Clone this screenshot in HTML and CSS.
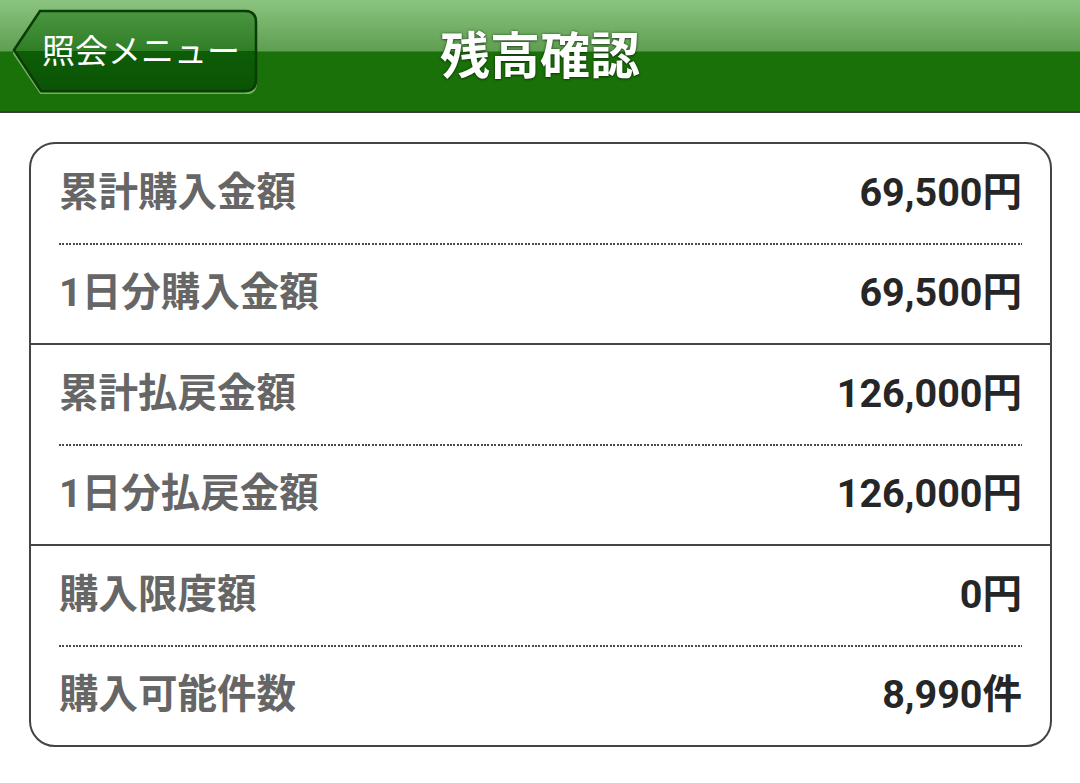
FILE: index.html
```html
<!DOCTYPE html>
<html lang="ja">
<head>
<meta charset="utf-8">
<title>残高確認</title>
<link rel="stylesheet" href="styles.css">
</head>
<body>
<header class="topbar">
  <div class="topbar-left">
    <a class="back-btn" href="#">
      <svg class="back-bg" width="248" height="86" viewBox="0 0 248 86" aria-hidden="true">
        <defs>
          <linearGradient id="bfill" x1="0" y1="0" x2="0" y2="1">
            <stop offset="0" stop-color="#4b9641"/>
            <stop offset="0.5" stop-color="#2f7e26"/>
            <stop offset="0.5" stop-color="#0d5d07"/>
            <stop offset="1" stop-color="#0a5405"/>
          </linearGradient>
        </defs>
        <path d="M3 44 L29 4 L234 4 Q245 4 245 15 L245 73 Q245 84 234 84 L30 84 Z" fill="none" stroke="#74b164" stroke-width="2" transform="translate(0,1.5)"/>
        <path d="M3 42 L29 3 L234 3 Q245 3 245 14 L245 72 Q245 83 234 83 L30 83 Z" fill="url(#bfill)" stroke="#0a3d05" stroke-width="2.5"/>
      </svg>
      <span class="back-label">照会メニュー</span>
    </a>
  </div>
  <h1 class="title">残高確認</h1>
  <div class="topbar-right"></div>
</header>

<main class="content">
  <div class="card">
    <section class="group">
      <div class="row"><span class="label">累計購入金額</span><span class="value">69,500円</span></div>
      <div class="dots"></div>
      <div class="row"><span class="label">1日分購入金額</span><span class="value">69,500円</span></div>
    </section>
    <section class="group">
      <div class="row"><span class="label">累計払戻金額</span><span class="value">126,000円</span></div>
      <div class="dots"></div>
      <div class="row"><span class="label">1日分払戻金額</span><span class="value">126,000円</span></div>
    </section>
    <section class="group">
      <div class="row"><span class="label">購入限度額</span><span class="value">0円</span></div>
      <div class="dots"></div>
      <div class="row"><span class="label">購入可能件数</span><span class="value">8,990件</span></div>
    </section>
  </div>
</main>
</body>
</html>
```

FILE: styles.css
```css
html, body {
  margin: 0;
  padding: 0;
  background: #ffffff;
}

body {
  font-family: Roboto, "Noto Sans CJK JP", sans-serif;
}

.topbar {
  height: 111px;
  border-bottom: 2px solid #3c3c3c;
  background: linear-gradient(to bottom, #8bc480 0px, #5f9f51 51px, #1b7109 52px, #1b7109 111px);
  display: grid;
  grid-template-columns: 1fr auto 1fr;
  align-items: center;
}

.topbar-left {
  display: flex;
  align-items: flex-start;
  align-self: start;
}

.back-btn {
  position: relative;
  display: flex;
  align-items: center;
  width: 248px;
  height: 86px;
  margin-left: 11px;
  margin-top: 8px;
  text-decoration: none;
}

.back-bg {
  position: absolute;
  left: 0;
  top: 0;
}

.back-label {
  position: relative;
  padding-left: 31px;
  padding-bottom: 3px;
  color: #ffffff;
  font-family: "Noto Sans CJK JP", sans-serif;
  font-size: 33px;
  font-weight: 400;
  line-height: 1;
}

.title {
  margin: 0;
  padding-bottom: 8px;
  color: #ffffff;
  font-family: "Noto Sans CJK JP", sans-serif;
  font-size: 50px;
  font-weight: 700;
  line-height: 1;
  text-shadow: 0 0 3px rgba(0, 40, 0, 0.6), 0 1px 2px rgba(0, 0, 0, 0.4);
}

.content {
  padding: 29px 28px 0 29px;
}

.card {
  border: 2px solid #444444;
  border-radius: 26px;
  overflow: hidden;
}

.group + .group {
  border-top: 2px solid #444444;
}

.group {
  padding: 0 28px;
}

.row {
  height: 98px;
  display: flex;
  align-items: center;
  justify-content: space-between;
  font-size: 39.5px;
  font-weight: 700;
  line-height: 1;
}

.row:first-child {
  height: 99px;
}

.label {
  color: #666666;
  padding-bottom: 2px;
}

.value {
  color: #262626;
  padding-bottom: 2px;
}

.dots {
  height: 2px;
  background-image: repeating-linear-gradient(to right, #4a4a4a 0, #4a4a4a 2px, transparent 2px, transparent 3.4px);
}
```
